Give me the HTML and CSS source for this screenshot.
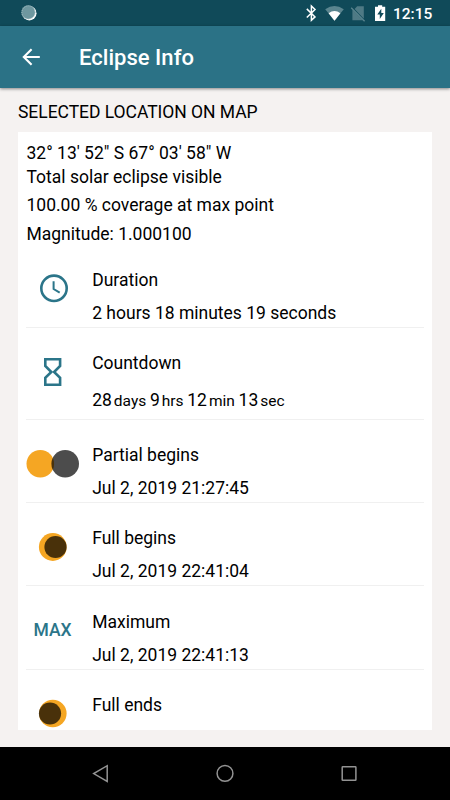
FILE: index.html
```html
<!DOCTYPE html>
<html lang="en">
<head>
<meta charset="utf-8">
<title>Eclipse Info</title>
<link rel="stylesheet" href="styles.css">
</head>
<body>
<div class="screen">
  <div class="status">
    <svg class="status-left" width="17" height="17" viewBox="0 0 17 17"><circle cx="8.3" cy="8.2" r="7.2" fill="#fff"/><circle cx="7.2" cy="7.2" r="6.9" fill="#6e979f"/><circle cx="7.5" cy="7.4" r="6.6" fill="none" stroke="#a5bfc4" stroke-width="1" stroke-dasharray="1 1"/></svg>
    <svg class="status-icons" width="90" height="26" viewBox="0 0 90 26">
      <path d="M6.8 9.2l8.2 8-3.6 3.3V6.3L15 9.8l-8.2 8" transform="translate(0 -.3)" fill="none" stroke="#fff" stroke-width="1.5"/>
      <path d="M25.2 9.2Q34.5 2.6 43.8 9.2L34.5 20.7z" fill="#5b858f"/>
      <path d="M28.6 13.2Q34.5 9 40.4 13.2L34.5 20.7z" fill="#fff"/>
      <path d="M57.2 6.2h6.6v12.6L54.6 9zM52.4 9.8l10.4 10.4H52.4z" fill="#4f7a85"/>
      <path d="M51.2 7.8l13.4 13.4" stroke="#5b858f" stroke-width="1.3"/>
      <path d="M75 6.8h3V5.2h4.2v1.6h3V21H75z" fill="#fff"/>
      <path d="M81.3 8.7l-4 5.8h2.5v4.4l4-6h-2.5z" fill="#104a59"/>
    </svg>
    <span class="clock">12:15</span>
  </div>
  <header class="appbar">
    <svg class="back" width="18" height="18" viewBox="0 0 18 18"><path d="M17.8 9H2M9.6 1.2L1.8 9l7.8 7.8" fill="none" stroke="#fff" stroke-width="2.1"/></svg>
    <h1>Eclipse Info</h1>
  </header>
  <main class="content">
    <h2>SELECTED LOCATION ON MAP</h2>
    <section class="card">
      <div class="summary">
        <p class="coords">32° 13' 52" S 67° 03' 58" W</p>
        <p>Total solar eclipse visible</p>
        <p>100.00 % coverage at max point</p>
        <p class="magnitude">Magnitude: 1.000100</p>
      </div>
      <div class="row tall">
        <div class="icon"><svg width="54" height="30" viewBox="0 0 54 30"><circle cx="28" cy="15.3" r="12.7" fill="none" stroke="#2b7589" stroke-width="2.6"/><path d="M27.6 8.2v7.8l6.1 3.7" fill="none" stroke="#2b7589" stroke-width="2"/></svg></div>
        <div class="text"><p>Duration</p><p>2 hours 18 minutes 19 seconds</p></div>
      </div>
      <div class="row countdown">
        <div class="icon"><svg width="54" height="30" viewBox="0 0 54 30"><path d="M19.3 2.2h14.8v6.8L28.1 15l6 5.7v7H19.3v-7l6-5.7-6-6z" fill="none" stroke="#2b7589" stroke-width="2.6"/></svg></div>
        <div class="text"><p>Countdown</p><p class="timer"><span>28</span><small>days</small><span>9</span><small>hrs</small><span>12</span><small>min</small><span>13</span><small>sec</small></p></div>
      </div>
      <div class="row">
        <div class="icon"><svg width="54" height="30" viewBox="0 0 54 30"><circle cx="14.3" cy="14.7" r="13.8" fill="#f5a623"/><circle cx="39.2" cy="14.7" r="13.8" fill="#000" fill-opacity=".7"/></svg></div>
        <div class="text"><p>Partial begins</p><p>Jul 2, 2019 21:27:45</p></div>
      </div>
      <div class="row">
        <div class="icon"><svg width="54" height="30" viewBox="0 0 54 30"><circle cx="26.8" cy="15" r="13.9" fill="#f5a623"/><circle cx="29.5" cy="15" r="11.1" fill="#000" fill-opacity=".7"/></svg></div>
        <div class="text"><p>Full begins</p><p>Jul 2, 2019 22:41:04</p></div>
      </div>
      <div class="row tall">
        <div class="icon max">MAX</div>
        <div class="text"><p>Maximum</p><p>Jul 2, 2019 22:41:13</p></div>
      </div>
      <div class="row">
        <div class="icon"><svg width="54" height="30" viewBox="0 0 54 30"><circle cx="26.8" cy="14.5" r="13.8" fill="#f5a623"/><circle cx="24" cy="14.5" r="11.1" fill="#000" fill-opacity=".7"/></svg></div>
        <div class="text"><p>Full ends</p></div>
      </div>
    </section>
  </main>
  <nav class="navbar">
    <svg width="450" height="53" viewBox="0 0 450 53"><g fill="none" stroke="#939393" stroke-width="1.5"><path d="M107.2 18.7v15.8L93.7 26.6z"/><circle cx="225" cy="26.4" r="7.9"/><rect x="342.2" y="19.8" width="13.7" height="13.5" rx=".6"/></g></svg>
  </nav>
</div>
</body>
</html>
```
FILE: styles.css
```css
* { box-sizing: border-box; }
body { margin: 0; font-family: Roboto, "Liberation Sans", sans-serif; font-size: 17.5px; line-height: 20px; color: #000; }
h1, h2, p { margin: 0; font-weight: 400; }
svg { display: block; }
.screen { width: 450px; height: 800px; display: flex; flex-direction: column; background: #f5f2f1; overflow: hidden; }
.status { height: 26px; background: #104a59; display: flex; align-items: flex-start; color: #fff; }
.status-left { margin: 5px 0 0 21px; }
.status-icons { margin-left: 262px; }
.clock { margin: 4px 0 0 3px; font-size: 15.5px; font-weight: 500; }
.appbar { height: 62px; background: #2b7286; display: flex; align-items: center; padding-left: 22px; color: #fff; box-shadow: 0 1px 3px rgba(0, 0, 0, .45); z-index: 1; }
.appbar h1 { margin: 2px 0 0 39px; font-size: 22px; line-height: 26px; font-weight: 500; letter-spacing: .03px; }
.content { flex: 1; padding: 14px 18px 0; }
.content h2 { font-size: 17.5px; letter-spacing: -.04px; line-height: 20px; margin-bottom: 10px; }
.card { height: 598px; background: #fff; padding: 11px 8px 0; overflow: hidden; }
.summary { height: 101px; padding-left: .5px; line-height: 28px; }
.summary .coords { line-height: 20px; }
.summary .magnitude { padding-top: 1px; }
.summary p { white-space: nowrap; }
.row { height: 83px; display: flex; border-bottom: 1px solid #f0f0f0; padding-top: 25px; }
.row.tall { height: 84px; }
.row.countdown { height: 92px; }
.icon { width: 54px; height: 30px; padding-top: 4px; }
.icon.max { color: #2b7589; font-weight: 500; text-align: center; padding: 9px 1px 0 0; }
.text { margin-left: 12.2px; display: flex; flex-direction: column; gap: 13px; white-space: nowrap; }
.tall .text { padding-top: 1px; }
.countdown .text { gap: 17px; }
.timer { display: flex; align-items: baseline; }
.timer small { font-size: 15.5px; margin: 0 3.7px 0 2px; }
.navbar { height: 53px; background: #000; }
```
